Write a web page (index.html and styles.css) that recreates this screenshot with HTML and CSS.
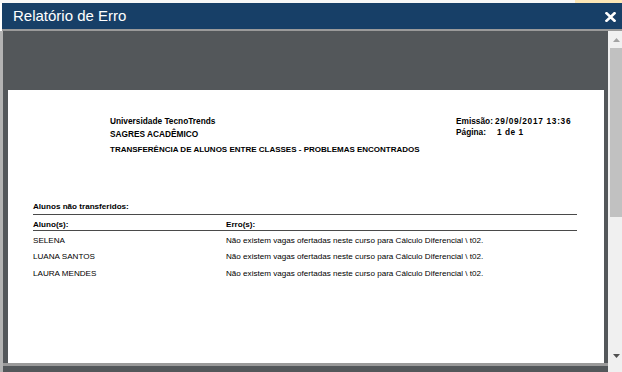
FILE: index.html
```html
<!DOCTYPE html>
<html lang="pt-BR">
<head>
  <meta charset="UTF-8" />
  <meta name="viewport" content="width=device-width, initial-scale=1.0"/>
  <title>Relatório de Erro</title>
  <link rel="stylesheet" href="styles.css">
</head>
<body>
  <div class="top-strip">
    <span class="top-strip-fill"></span>
    <span class="top-strip-warn"></span>
  </div>

  <div class="dialog">
    <div class="dialog-header">
      <span class="dialog-title">Relatório de Erro</span>
      <span class="dialog-close" title="Fechar">
        <svg width="11" height="10" viewBox="0 0 11 10">
          <path d="M1.5 1.2 L9.5 8.8 M9.5 1.2 L1.5 8.8" stroke="#fff" stroke-width="2.6" stroke-linecap="square"/>
        </svg>
      </span>
    </div>

    <div class="dialog-body">
      <div class="viewer">
        <div class="viewport">
          <div class="page">
            <div class="report-head">
              <div class="head-left">
                <div class="head-line">Universidade TecnoTrends</div>
                <div class="head-line">SAGRES ACADÊMICO</div>
                <div class="head-line head-title">TRANSFERÊNCIA DE ALUNOS ENTRE CLASSES - PROBLEMAS ENCONTRADOS</div>
              </div>
              <div class="head-right">
                <div class="meta-row"><span class="meta-label">Emissão:</span><span class="meta-value meta-date">29/09/2017 13:36</span></div>
                <div class="meta-row"><span class="meta-label">Página:</span><span class="meta-value meta-page">1 de 1</span></div>
              </div>
            </div>

            <div class="report-section">
              <div class="section-title">Alunos não transferidos:</div>
              <div class="report-table">
                <div class="th">Aluno(s):</div>
                <div class="th">Erro(s):</div>

                <div class="td">SELENA</div>
                <div class="td">Não existem vagas ofertadas neste curso para Cálculo Diferencial \ t02.</div>

                <div class="td">LUANA SANTOS</div>
                <div class="td">Não existem vagas ofertadas neste curso para Cálculo Diferencial \ t02.</div>

                <div class="td">LAURA MENDES</div>
                <div class="td">Não existem vagas ofertadas neste curso para Cálculo Diferencial \ t02.</div>
              </div>
            </div>
          </div>
        </div>
        <div class="viewer-foot"></div>
      </div>

      <div class="vscroll">
        <div class="vscroll-btn">
          <svg width="7" height="4" viewBox="0 0 7 4"><path d="M0 4 L3.5 0 L7 4 Z" fill="#a3a3a3"/></svg>
        </div>
        <div class="vscroll-thumb"></div>
        <div class="vscroll-track"></div>
        <div class="vscroll-btn">
          <svg width="7" height="4" viewBox="0 0 7 4"><path d="M0 0 L7 0 L3.5 4 Z" fill="#505050"/></svg>
        </div>
        <div class="vscroll-end"></div>
      </div>
    </div>
  </div>
</body>
</html>
```

FILE: styles.css
```css
* {
  margin: 0;
  padding: 0;
  box-sizing: border-box;
}

html, body {
  height: 100%;
  overflow: hidden;
}

body {
  font-family: 'Liberation Sans', Arial, sans-serif;
  background: #ffffff;
}

/* page behind the dialog */
.top-strip {
  display: flex;
  height: 3px;
}

.top-strip-fill {
  flex: 1;
  background: #f7f7f7;
}

.top-strip-warn {
  width: 47px;
  background: #fbe6b6;
}

.dialog {
  display: flex;
  flex-direction: column;
  height: 369px;
}

.dialog-header {
  display: flex;
  align-items: center;
  justify-content: space-between;
  height: 28px;
  margin-left: 2px;
  padding: 0 6px 0 11px;
  background: #173f67;
  border-bottom: 2px solid #9a9a9a;
}

.dialog-title {
  color: #ffffff;
  font-size: 15px;
  line-height: 26px;
}

.dialog-close {
  display: flex;
  margin-top: 1px;
  cursor: pointer;
}

.dialog-body {
  flex: 1;
  display: flex;
  min-height: 0;
}

.viewer {
  flex: 1;
  display: flex;
  flex-direction: column;
  background: #53575a;
  border-left: 3px solid #b3b3b3;
}

.viewport {
  height: 335px;
  padding: 59px 4px 0 5px;
  overflow: hidden;
  border-bottom: 3px solid #9a9a9a;
}

.viewer-foot {
  flex: 1;
}

/* report page */
.page {
  height: 600px;
  background: #ffffff;
  color: #000000;
  font-size: 8.1px;
}

.report-head {
  display: flex;
  padding: 25px 0 0 102px;
  font-weight: bold;
  font-size: 8.3px;
}

.head-left {
  width: 346px;
}

.head-line {
  line-height: 13px;
}

.head-title {
  margin-top: 2.4px;
  font-size: 8px;
}

.head-right {
  margin-top: 1px;
}

.meta-row {
  display: flex;
  line-height: 10.7px;
}

.meta-label {
  width: 39px;
}

.meta-value {
  letter-spacing: 0.5px;
}

.meta-date {
  letter-spacing: 0.7px;
}

.meta-page {
  margin-left: 2px;
}

.report-section {
  margin: 45px 27px 0 25px;
}

.section-title {
  font-weight: bold;
  line-height: 11px;
  padding-bottom: 2px;
  border-bottom: 1px solid #4a4a4a;
}

.report-table {
  display: grid;
  grid-template-columns: 193px 1fr;
}

.th {
  font-weight: bold;
  line-height: 11px;
  padding-top: 4px;
  border-bottom: 1px solid #4a4a4a;
}

.td {
  line-height: 16.5px;
}

.report-table .th + .td,
.report-table .th + .td + .td {
  padding-top: 1.5px;
}

/* vertical scrollbar */
.vscroll {
  width: 14px;
  display: flex;
  flex-direction: column;
  background: #f0f0f0;
}

.vscroll-btn {
  height: 17px;
  display: flex;
  align-items: center;
  padding-left: 5px;
}

.vscroll-thumb {
  height: 169px;
  margin-left: 2px;
  background: #c1c1c1;
}

.vscroll-track {
  flex: 1;
}

.vscroll-end {
  height: 8px;
}
```
